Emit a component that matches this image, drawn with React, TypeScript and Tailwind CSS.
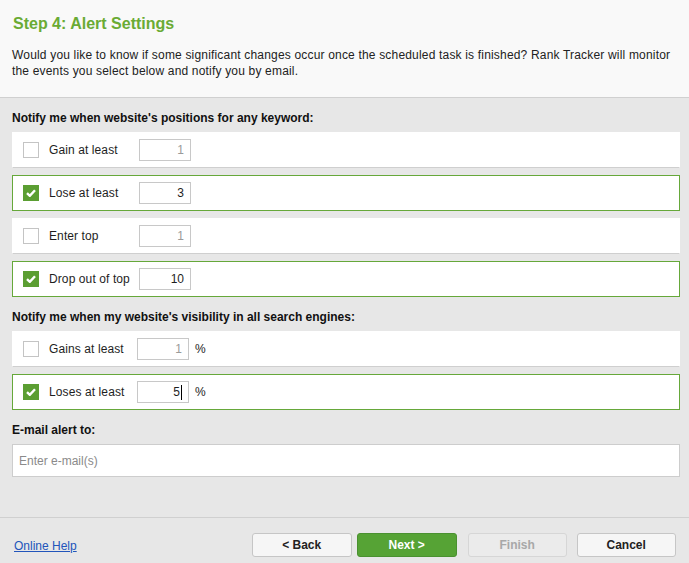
import React from "react";

const font = { fontFamily: '"Liberation Sans", Arial, sans-serif' };

function Check({ on }: { on: boolean }) {
  if (!on)
    return <div className="w-[16px] h-[16px] border border-[#c4c4c4] bg-white shrink-0" />;
  return (
    <div className="w-[16px] h-[16px] bg-[#5b9e32] shrink-0 flex items-center justify-center">
      <svg width="10" height="8" viewBox="0 0 10 8">
        <path d="M1 4.2 L3.8 6.8 L9 1.2" stroke="white" strokeWidth="2.4" fill="none" />
      </svg>
    </div>
  );
}

function Row({
  on,
  label,
  value,
  pct,
  caret,
}: {
  on: boolean;
  label: string;
  value: string;
  pct?: boolean;
  caret?: boolean;
}) {
  return (
    <div
      className={
        "h-[36px] bg-white flex items-center pl-[10px] border " +
        (on ? "border-[#66a83a]" : "border-white border-b-[#cfcfcf]")
      }
    >
      <Check on={on} />
      <div className="ml-[10px] text-[12px] tracking-[0.1px] text-[#1e1e1e] w-[90px] whitespace-nowrap">{label}</div>
      <div
        className={
          "h-[22px] w-[52px] border border-[#c8c8c8] bg-white flex items-center justify-end pr-[6px] text-[12px] " +
          (pct ? "-ml-[2px] " : "") +
          (on ? "text-[#1e1e1e]" : "text-[#9a9a9a]")
        }
      >
        {value}
        {caret && <span className="inline-block w-px h-[15px] bg-black ml-px" />}
      </div>
      {pct && <div className="ml-[6px] text-[12px] text-[#1e1e1e]">%</div>}
    </div>
  );
}

function SectionLabel({ text }: { text: string }) {
  return (
    <div className="pb-[7px] pl-[12px] h-[34px] pt-[13px]">
      <div className="text-[12px] leading-[14px] font-bold text-[#111]">{text}</div>
    </div>
  );
}

export default function App() {
  return (
    <div className="w-[689px] h-[563px] bg-[#e7e7e7] flex flex-col overflow-hidden" style={font}>
      <div className="h-[98px] shrink-0 bg-[#f9f9f9] border-b border-[#d0d0d0] pl-[13px] pt-[14px]">
        <div className="text-[16px] leading-[20px] font-bold text-[#6aab34]">Step 4: Alert Settings</div>
        <div className="mt-[13px] w-[664px] text-[12px] tracking-[0.18px] leading-[16px] text-[#222] -ml-px">
          Would you like to know if some significant changes occur once the scheduled task is finished? Rank Tracker will monitor
          the events you select below and notify you by email.
        </div>
      </div>
      <div className="pr-[9px]">
        <SectionLabel text="Notify me when website's positions for any keyword:" />
        <div className="pl-[12px] flex flex-col gap-[7px]">
          <Row on={false} label="Gain at least" value="1" />
          <Row on={true} label="Lose at least" value="3" />
          <Row on={false} label="Enter top" value="1" />
          <Row on={true} label="Drop out of top" value="10" />
        </div>
        <SectionLabel text="Notify me when my website's visibility in all search engines:" />
        <div className="pl-[12px] flex flex-col gap-[7px]">
          <Row on={false} label="Gains at least" value="1" pct />
          <Row on={true} label="Loses at least" value="5" pct caret />
        </div>
        <SectionLabel text="E-mail alert to:" />
        <div className="pl-[12px]">
          <div className="h-[33px] bg-white border border-[#cdcdcd] flex items-center pl-[6px] text-[12px] text-[#8a8a8a]">
            Enter e-mail(s)
          </div>
        </div>
      </div>
      <div className="mt-auto h-[46px] shrink-0 border-t border-[#d0d0d0] flex items-start pl-[14px] pt-[15px]">
        <a className="mt-[4px] text-[12px] text-[#2255bb] underline">Online Help</a>
        <button className="ml-[175px] w-[100px] h-[24px] rounded-[3px] border border-[#c6c6c6] bg-[#f6f6f6] text-[12px] font-bold text-[#222]">
          &lt; Back
        </button>
        <button className="ml-[5px] w-[100px] h-[24px] rounded-[3px] border border-[#4a9130] bg-[#56a335] text-[12px] font-bold text-white">
          Next &gt;
        </button>
        <button className="ml-[11px] w-[99px] h-[24px] rounded-[3px] border border-[#d6d6d6] bg-[#ebebeb] text-[12px] font-bold text-[#a8a8a8]">
          Finish
        </button>
        <button className="ml-[10px] w-[99px] h-[24px] rounded-[3px] border border-[#c6c6c6] bg-[#f6f6f6] text-[12px] font-bold text-[#222]">
          Cancel
        </button>
      </div>
    </div>
  );
}
